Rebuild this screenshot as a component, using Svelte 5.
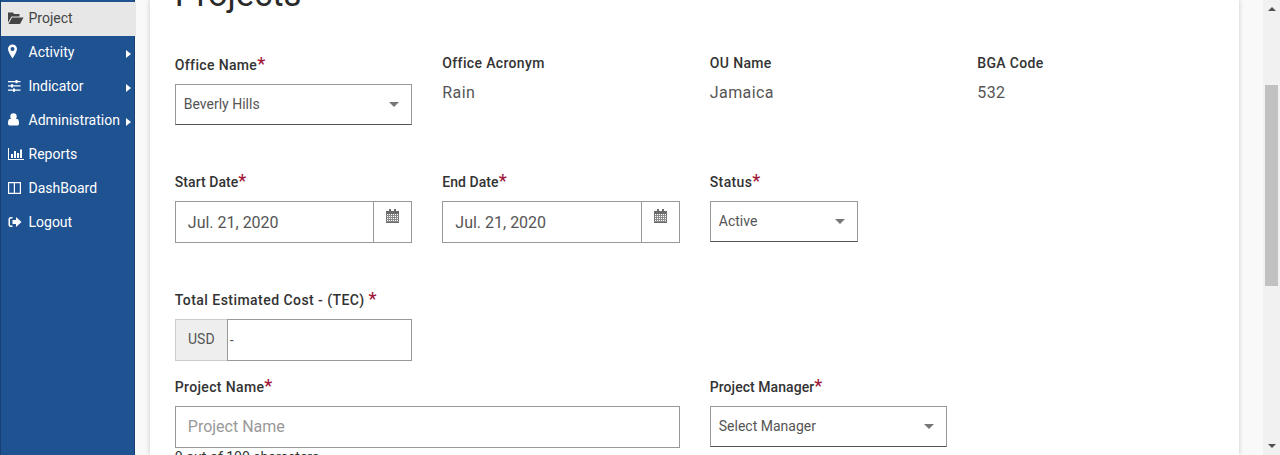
<script>
	const menu = [
		{ name: 'Project', icon: 'folder', active: true },
		{ name: 'Activity', icon: 'pin', more: true },
		{ name: 'Indicator', icon: 'sliders', more: true },
		{ name: 'Administration', icon: 'user', more: true },
		{ name: 'Reports', icon: 'chart' },
		{ name: 'DashBoard', icon: 'columns' },
		{ name: 'Logout', icon: 'logout' }
	]
	const calendarRows = [0, 1, 2, 3]
	const calendarCols = [0, 1, 2, 3, 4]
</script>

{#snippet calendar()}
	<svg class="cal" width="13" height="14" viewBox="0 0 13 14">
		<rect x="0.5" y="2.5" width="12" height="11" fill="none" stroke="#6a6a6a" />
		<rect x="0" y="2" width="13" height="3" fill="#6a6a6a" />
		<rect x="3" y="0" width="2" height="3" fill="#6a6a6a" />
		<rect x="8" y="0" width="2" height="3" fill="#6a6a6a" />
		{#each calendarRows as r}
			<line x1="0" x2="13" y1={6.5 + r * 2} y2={6.5 + r * 2} stroke="#8a8a8a" />
		{/each}
		{#each calendarCols as c}
			<line x1={2.5 + c * 2} x2={2.5 + c * 2} y1="5" y2="13" stroke="#8a8a8a" />
		{/each}
	</svg>
{/snippet}

{#snippet icon(name)}
	<svg class="icon" width="16" height="16" viewBox="0 0 16 16" fill="currentColor">
		{#if name === 'folder'}
			<path d="M0 2.500h5l1 1.500h5.500v2.500H3.500L0 12.500zM4 7.500h11.500L12 14H0.500z" />
		{:else if name === 'pin'}
			<path fill-rule="evenodd" d="M4.500 .5a4.500 4.500 0 0 1 4.500 4.500c0 2.500-2.500 6-4.500 9.500C2.500 11 0 7.500 0 5A4.500 4.500 0 0 1 4.500 .5zm0 2.500a2 2 0 1 0 0 4 2 2 0 0 0 0-4z" />
		{:else if name === 'sliders'}
			<path d="M0 3h12.500v1.300H0zM0 7.300h12.500v1.300H0zM0 11.500h12.500v1.300H0z" />
			<path d="M7.500 2h2v3.300h-2zM3 6.300h2v3.300H3zM5 10.500h2v3.300H5z" />
		{:else if name === 'user'}
			<circle cx="5.500" cy="4.500" r="3.200" />
			<path d="M1.500 7h8c1 .5 1.500 2 1.500 4.500 0 1.500-1 2-2 2H2c-1 0-2-.5-2-2C0 9 .5 7.500 1.500 7z" />
		{:else if name === 'chart'}
			<path d="M0 2h1v11h15v1H0z" />
			<path d="M3 8h2v4H3zM6 5h2v7H6zM9 7h2v5H9zM12 3.500h2V12h-2z" />
		{:else if name === 'columns'}
			<path fill-rule="evenodd" d="M0 2h13v12H0zM1.200 3.300v9.400h4.600V3.300zM7 3.300v9.400h4.800V3.300z" />
		{:else}
			<path d="M4.500 3H2.800C1.500 3 .5 4 .5 5.300v5.400C.5 12 1.500 13 2.800 13h1.700v-1.500H3c-.5 0-1-.4-1-1V5.500c0-.6.500-1 1-1h1.500z" />
			<path d="M8 3l5.500 5L8 13v-3H4.500V6H8z" />
		{/if}
	</svg>
{/snippet}

<div class="page">
	<nav class="sidebar">
		<ul>
			{#each menu as item}
				<li class:active={item.active}>
					{@render icon(item.icon)}
					<span>{item.name}</span>
					{#if item.more}<i class="caret"></i>{/if}
				</li>
			{/each}
		</ul>
	</nav>

	<main class="main">
		<section class="card">
			<h1>Projects</h1>

			<div class="row first">
				<div class="col">
					<label>Office Name<em>*</em></label>
					<div class="select"><span>Beverly Hills</span><i class="arrow"></i></div>
				</div>
				<div class="col">
					<label class="plain">Office Acronym</label>
					<p class="value">Rain</p>
				</div>
				<div class="col">
					<label class="plain">OU Name</label>
					<p class="value">Jamaica</p>
				</div>
				<div class="col">
					<label class="plain">BGA Code</label>
					<p class="value">532</p>
				</div>
			</div>

			<div class="row second">
				<div class="col">
					<label class="tight">Start Date<em>*</em></label>
					<div class="group">
						<div class="input">Jul. 21, 2020</div>
						<div class="addon">{@render calendar()}</div>
					</div>
				</div>
				<div class="col">
					<label class="tight">End Date<em>*</em></label>
					<div class="group">
						<div class="input">Jul. 21, 2020</div>
						<div class="addon">{@render calendar()}</div>
					</div>
				</div>
				<div class="col">
					<label>Status<em>*</em></label>
					<div class="select status"><span>Active</span><i class="arrow"></i></div>
				</div>
			</div>

			<div class="row third">
				<div class="col">
					<label class="loose">Total Estimated Cost - (TEC) <em>*</em></label>
					<div class="group money">
						<div class="prefix">USD</div>
						<div class="amount">-</div>
					</div>
				</div>
			</div>

			<div class="row fourth">
				<div class="col wide">
					<label>Project Name<em>*</em></label>
					<div class="input placeholder">Project Name</div>
					<small>0 out of 100 characters</small>
				</div>
				<div class="col">
					<label class="tight">Project Manager<em>*</em></label>
					<div class="select"><span>Select Manager</span><i class="arrow"></i></div>
				</div>
			</div>
		</section>
	</main>

	<div class="scrollbar">
		<i class="up"></i>
		<div class="track"><div class="thumb"></div></div>
		<i class="down"></i>
	</div>
</div>

<style>
	:global(body) {
		margin: 0;
		overflow: hidden;
	}

	.page {
		display: flex;
		height: 455px;
		overflow: hidden;
		background: #f9f9f9;
		font-family: Roboto, "Liberation Sans", sans-serif;
		color: #333;
	}

	.sidebar {
		box-sizing: border-box;
		flex: 0 0 135px;
		padding-top: 2px;
		background: #1f5290;
		border-left: 1px solid #173f70;
		border-right: 1px solid #173f70;
	}

	ul {
		margin: 0;
		padding: 0;
		list-style: none;
	}

	li {
		display: flex;
		align-items: center;
		height: 34px;
		padding: 0 0 2px 7px;
		font-size: 14px;
		color: #fff;
		box-sizing: border-box;
	}

	li.active {
		width: 135px;
		margin-right: -2px;
		background: #e7e7e7;
		color: #444;
	}

	li span {
		margin-left: 4.5px;
	}

	.icon {
		flex: none;
	}

	.caret {
		position: absolute;
		left: 126px;
		margin-top: 3px;
		border-left: 5px solid #fff;
		border-top: 4.5px solid transparent;
		border-bottom: 4.5px solid transparent;
	}

	.main {
		flex: 1;
		min-width: 0;
		padding: 0 24px 0 15px;
	}

	.card {
		box-sizing: border-box;
		height: 455px;
		padding: 0 10px 0 9.8px;
		overflow: hidden;
		background: #fff;
		box-shadow: 0 0 5px rgba(0, 0, 0, 0.2);
	}

	h1 {
		height: 14px;
		margin: 0;
		padding-left: 15px;
		font-size: 34.500px;
		font-weight: 400;
		line-height: 14px;
		color: #2a2a2a;
		transform: translateY(-13px);
	}

	.row {
		display: flex;
	}

	.first { margin-top: 41px; height: 117px; }
	.second { height: 118px; }
	.third { height: 87px; }

	.col {
		box-sizing: border-box;
		flex: 0 0 267.5px;
		padding: 0 15px;
	}

	.col.wide {
		flex-basis: 535px;
	}

	label {
		display: block;
		font-size: 14px;
		font-weight: 500;
		letter-spacing: 0.35px;
		line-height: 20px;
		margin-bottom: 9px;
		color: #333;
	}

	label.tight {
		letter-spacing: 0.05px;
	}

	label.loose {
		letter-spacing: 0.45px;
	}

	label.plain {
		margin-top: -2px;
		margin-bottom: 8px;
	}

	label em {
		font-style: normal;
		font-size: 18px;
		line-height: 18px;
		color: #a0183a;
	}

	.value {
		margin: 0;
		font-size: 16px;
		letter-spacing: 0.4px;
		line-height: 24px;
		color: #555;
	}

	.select {
		box-sizing: border-box;
		display: flex;
		align-items: center;
		justify-content: space-between;
		height: 41px;
		padding: 0 12px 1px 8px;
		background: #fff;
		border: 1px solid #999;
		border-bottom-color: #555;
		font-size: 14px;
		color: #555;
	}

	.status {
		width: 148px;
	}

	.arrow {
		border-top: 5px solid #777;
		border-left: 5px solid transparent;
		border-right: 5px solid transparent;
		margin-top: 1px;
	}

	.group {
		display: flex;
		height: 42px;
		box-sizing: border-box;
	}

	.input {
		box-sizing: border-box;
		display: flex;
		align-items: center;
		flex: 1;
		height: 42px;
		padding: 0 12px;
		border: 1px solid #999;
		font-size: 16px;
		color: #555;
	}

	.placeholder {
		padding-bottom: 2px;
		color: #999;
	}

	.addon {
		box-sizing: border-box;
		flex: 0 0 38px;
		height: 42px;
		padding: 7px 0 0 12px;
		border: 1px solid #999;
		border-left: 0;
	}

	.cal {
		display: block;
	}

	.prefix {
		box-sizing: border-box;
		display: flex;
		align-items: center;
		justify-content: center;
		flex: 0 0 52px;
		padding-bottom: 2px;
		background: #eee;
		border: 1px solid #ccc;
		border-right: 0;
		font-size: 14px;
		color: #555;
	}

	.amount {
		box-sizing: border-box;
		display: flex;
		align-items: center;
		flex: 1;
		padding-left: 2px;
		border: 1px solid #999;
		font-size: 14px;
		color: #555;
	}

	small {
		display: block;
		margin-top: 1px;
		font-size: 14px;
		line-height: 16px;
		color: #333;
	}

	.scrollbar {
		position: relative;
		flex: 0 0 17px;
		display: flex;
		flex-direction: column;
		align-items: center;
		background: #f1f1f1;
	}

	.track {
		flex: 1;
		width: 100%;
		padding-top: 74px;
		box-sizing: border-box;
	}

	.thumb {
		width: 13px;
		height: 201px;
		margin: 0 auto 0 2px;
		background: #c1c1c1;
	}

	.up, .down {
		display: block;
		flex: none;
		width: 0;
		height: 0;
		border-left: 4px solid transparent;
		border-right: 4px solid transparent;
	}

	.up {
		margin-top: 7px;
		border-bottom: 4px solid #505050;
	}

	.down {
		margin-bottom: 7px;
		border-top: 4px solid #505050;
	}
</style>
